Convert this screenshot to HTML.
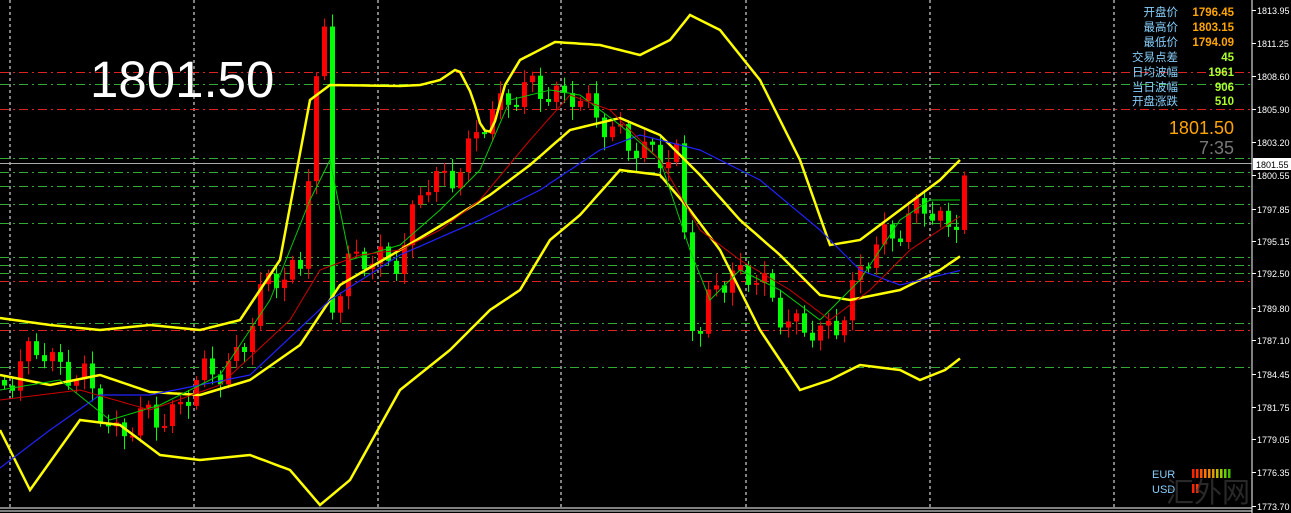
<!DOCTYPE html>
<html><head><meta charset="utf-8"><style>
html,body{margin:0;padding:0;background:#000;width:1291px;height:513px;overflow:hidden}
svg{position:absolute;left:0;top:0}
.t{font-family:"Liberation Sans","Noto Sans CJK SC",sans-serif}
</style></head><body>
<svg id="s" width="1291" height="513" viewBox="0 0 1291 513" xmlns="http://www.w3.org/2000/svg">
<rect width="1291" height="513" fill="#000"/>
<g id="grid"></g>
<g id="cand"></g>
<g id="ind" fill="none"></g>
<line x1="1252" y1="0" x2="1252" y2="513" stroke="#fff" stroke-width="1"/>
<line x1="0" y1="508" x2="1252" y2="508" stroke="#fff" stroke-width="1"/>
<line x1="0" y1="511" x2="1252" y2="511" stroke="#fff" stroke-width="1"/>
<g id="ax" class="t" font-size="9" fill="#fff"></g>
<text class="t" x="90" y="97" font-size="51" fill="#fff">1801.50</text>
<g class="t" font-size="11.5">
<g fill="#87cefa" text-anchor="end">
<text x="1178" y="16">开盘价</text><text x="1178" y="31">最高价</text><text x="1178" y="46">最低价</text>
<text x="1178" y="61">交易点差</text><text x="1178" y="76">日均波幅</text><text x="1178" y="91">当日波幅</text><text x="1178" y="105">开盘涨跌</text>
</g>
<g font-weight="bold" text-anchor="end">
<text x="1234" y="16" fill="#ffa500">1796.45</text><text x="1234" y="31" fill="#ffa500">1803.15</text><text x="1234" y="46" fill="#ffa500">1794.09</text>
<text x="1234" y="61" fill="#adff2f">45</text><text x="1234" y="76" fill="#adff2f">1961</text><text x="1234" y="91" fill="#adff2f">906</text><text x="1234" y="105" fill="#adff2f">510</text>
</g>
</g>
<text class="t" x="1234" y="134" font-size="18" fill="#ffa500" text-anchor="end">1801.50</text>
<text class="t" x="1234" y="154" font-size="18" fill="#777" text-anchor="end">7:35</text>
<text class="t" x="1152" y="478" font-size="11" fill="#87cefa">EUR</text>
<text class="t" x="1152" y="493" font-size="11" fill="#87cefa">USD</text>
<g id="bars"></g>
<text class="t" x="1166" y="502" font-size="28" fill="#444" fill-opacity="0.6">汇外网</text>
</svg>
<script>
(function(){
var NS="http://www.w3.org/2000/svg";
function el(p,t,a){var e=document.createElementNS(NS,t);for(var k in a)e.setAttribute(k,a[k]);document.getElementById(p).appendChild(e);return e;}
[10,194,378,561,746,930,1114].forEach(function(x){el("grid","line",{x1:x,y1:0,x2:x,y2:508,stroke:"#fff","stroke-dasharray":"3,3","stroke-width":1});});
[[72,"#d22"],[84,"#3a3"],[109,"#d22"],[158,"#3a3"],[172,"#3a3"],[186,"#3a3"],[204,"#3a3"],[223,"#3a3"],[257,"#3a3"],[265,"#3a3"],[273,"#3a3"],[281,"#d22"],[323,"#3a3"],[330,"#d22"],[367,"#3a3"]].forEach(function(h){el("grid","line",{x1:0,y1:h[0]+.5,x2:1252,y2:h[0]+.5,stroke:h[1],"stroke-dasharray":"9,4,2,4","stroke-width":1});});
el("grid","line",{x1:0,y1:163.5,x2:1252,y2:163.5,stroke:"#aaa","stroke-width":1});
function interp(pts,x){for(var i=1;i<pts.length;i++){if(x<=pts[i][0]){var a=pts[i-1],b=pts[i];return a[1]+(b[1]-a[1])*(x-a[0])/(b[0]-a[0]);}}return pts[pts.length-1][1];}
var cp=[[0,380],[40,350],[80,380],[110,430],[150,420],[170,410],[200,380],[240,350],[270,270],[300,270],[310,110],[322,40],[330,300],[345,260],[370,265],[400,250],[420,190],[450,170],[470,150],[490,110],[510,90],[540,95],[570,90],[590,120],[620,130],[640,160],[660,155],[675,150],[690,320],[700,350],[710,280],[740,270],[770,300],[800,330],[820,340],[840,310],[860,270],[880,240],[900,220],[920,210],[950,230],[962,170]];
var prev=interp(cp,0);
for(var i=0;i<121;i++){var x=2+i*8;var c=interp(cp,x)+Math.sin(i*1.7)*14+Math.cos(i*0.9)*7;
var o=prev;var up=c<o;var tp=Math.min(o,c),bt=Math.max(o,c);if(bt-tp<2)bt=tp+2;
var col=up?"#f00":"#0f0";
el("cand","line",{x1:x+2.5,y1:tp-4-(i%3)*4,x2:x+2.5,y2:bt+4+(i%4)*3,stroke:col,"stroke-width":1});
el("cand","rect",{x:x,y:tp,width:5,height:bt-tp,fill:col});prev=c;}
function pl(pts,col,w){var d="M";for(var x=0;x<=962;x+=5)d+=x+","+interp(pts,x).toFixed(1)+" ";el("ind","path",{d:d,stroke:col,"stroke-width":w});}
pl([[0,318],[50,325],[100,330],[150,325],[200,330],[240,320],[280,260],[310,100],[330,85],[400,86],[420,85],[440,80],[458,68],[472,95],[482,130],[492,132],[505,85],[520,60],[555,42],[600,45],[640,55],[670,40],[690,15],[720,30],[760,80],[800,160],[830,245],[860,240],[900,210],[940,180],[962,158]],"#ff0",2.5);
pl([[0,430],[30,490],[80,420],[120,425],[160,455],[200,460],[250,455],[290,470],[320,505],[350,480],[400,390],[450,350],[490,310],[520,290],[550,240],[580,215],[620,170],[660,175],[690,210],[720,250],[760,330],[800,390],[830,380],[860,365],[900,370],[920,380],[945,370],[962,357]],"#ff0",2.5);
pl([[0,375],[50,385],[100,375],[150,392],[200,395],[250,380],[300,345],[340,285],[400,250],[450,220],[490,195],[530,165],[570,130],[620,118],[660,135],[700,175],[740,220],[780,255],[820,295],[850,300],[900,290],[940,270],[962,255]],"#ff0",2.5);
pl([[0,468],[50,430],[100,395],[150,395],[250,375],[330,300],[400,255],[480,220],[540,190],[600,150],[640,135],[700,150],[760,180],[820,230],[860,270],[900,285],[962,270]],"#22f",1.2);
pl([[0,390],[60,380],[110,420],[160,405],[220,375],[270,300],[310,200],[330,160],[350,260],[400,245],[440,210],[480,170],[510,100],[550,90],[580,95],[620,125],[660,160],[690,250],[710,300],[740,270],[780,290],[820,320],[860,280],[900,220],[930,200],[962,200]],"#0c0",1);
pl([[0,400],[80,390],[150,410],[220,385],[290,320],[320,270],[360,255],[400,250],[440,230],[480,200],[530,140],[570,95],[610,110],[660,160],[700,230],[740,260],[790,290],[830,320],[870,290],[910,250],[962,215]],"#c00",1);
[["1813.95",14],["1811.25",47],["1808.60",80],["1805.90",113],["1803.20",146],["1800.55",179],["1797.85",213],["1795.15",245],["1792.50",277],["1789.80",312],["1787.10",344],["1784.45",378],["1781.75",411],["1779.05",443],["1776.35",476],["1773.70",510]].forEach(function(a){el("ax","line",{x1:1252,y1:a[1]-3.5,x2:1256,y2:a[1]-3.5,stroke:"#fff"});var t=el("ax","text",{x:1257,y:a[1]});t.textContent=a[0];});
el("ax","rect",{x:1253,y:158,width:38,height:12,fill:"#fff"});
var tt=el("ax","text",{x:1256,y:168,fill:"#000"});tt.textContent="1801.55";
var cols=["#f20","#f30","#f50","#f70","#e80","#d90","#bb0","#9c0","#6c0","#4b0"];
for(var k=0;k<10;k++)el("bars","rect",{x:1192+k*4,y:469,width:2.5,height:9,fill:cols[k]});
el("bars","rect",{x:1192,y:484,width:2.5,height:9,fill:"#f20"});el("bars","rect",{x:1196,y:484,width:2.5,height:9,fill:"#f30"});
})();
</script>
</body></html>
